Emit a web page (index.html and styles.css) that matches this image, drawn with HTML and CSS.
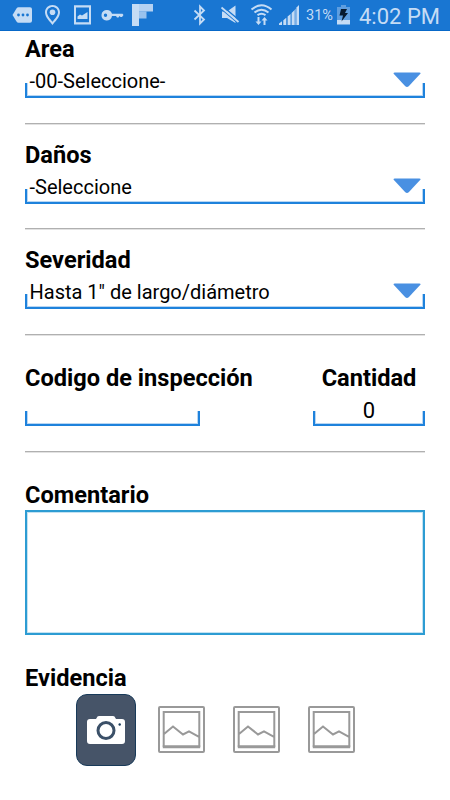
FILE: index.html
```
<!DOCTYPE html>
<html lang="es">
<head>
<meta charset="utf-8">
<title>Inspección</title>
<link rel="stylesheet" href="styles.css">
</head>
<body>
<header class="status">
  <svg class="status-icons" width="155" height="30" viewBox="0 0 155 30">
    <path d="M12.500 15l4-6.500q.8-1.200 2-1.200h11.500q2 0 2 2v11.400q0 2-2 2H18.500q-1.200 0-2-1.200z"/>
    <g class="blue"><circle cx="18.500" cy="15" r="1.400"/><circle cx="23" cy="15" r="1.400"/><circle cx="27.500" cy="15" r="1.400"/></g>
    <path fill-rule="evenodd" d="M52.500 5c-4.200 0-7.500 3.100-7.500 7.300 0 5 5.200 9.600 7.500 12.700 2.300-3.100 7.500-7.700 7.500-12.700C60 8.100 56.700 5 52.500 5zm0 2c3.100 0 5.500 2.300 5.500 5.300 0 3.400-3.400 6.700-5.500 9.500-2.100-2.800-5.500-6.100-5.500-9.500C47 9.300 49.400 7 52.500 7z"/>
    <circle cx="52.500" cy="12.300" r="2.800"/>
    <path fill-rule="evenodd" d="M74 5.300h17v19.200H74zM76 7.500v14.800h13V7.500z"/>
    <path d="M77.500 19v-2.500l2.500-2 2 1 5.500-3.500v7z"/>
    <path fill-rule="evenodd" d="M107 10a5.300 5.300 0 0 1 5 3.800h10.500l1 1.200-1.500 2h-1.500l-1-1-1 1.500h-1.500l-1-1.500h-4A5.300 5.300 0 1 1 107 10zm-1.500 3.600a1.700 1.700 0 1 0 0 3.400 1.700 1.700 0 0 0 0-3.400z"/>
    <path d="M132 4h7v22h-7z"/>
    <path opacity=".9" d="M139 4h14v7.500h-14z"/>
    <path opacity=".75" d="M139 11.500h7.500v7H139z"/>
  </svg>
  <div class="status-right">
    <svg width="108" height="30" viewBox="192 0 108 30">
      <path class="line" d="M194.500 10.500l9.500 9-4 4V6.500l4 4-9.500 9"/>
      <path d="M222 11.500h5L235.500 5.500V23L227 18h-5z"/>
      <path class="gap" d="M221 8.500l17 14.500M223 6.500l17 14.500"/>
      <path class="line" d="M221.500 7.500l17 14.500"/>
      <path class="wifi" d="M251.500 9.500Q261.500 1 271.500 9.500M254.500 12.500Q261.500 7 268.500 12.500M257.500 15.200Q261.500 12.500 265.500 15.200"/>
      <path d="M257.500 17h2v4.500h2l-3 3.500-3-3.500h2zM263.500 25h2v-4.500h2l-3-3.500-3 3.500h2z"/>
      <path d="M279 25v-1.500l3-2.200V25zm4.300 0v-4.800l3-2.400V25zm4.300 0v-8.400l3-2.700V25zm4 0V13l3-3v15z"/>
      <path opacity=".55" d="M294.500 10l2-2v17h-2z"/>
      <path d="M296.500 7.500l2.500-2.500v20h-2.500z"/>
    </svg>
    <span class="percent">31%</span>
    <svg class="battery" width="13" height="30" viewBox="337 0 13 30">
      <path opacity=".4" d="M341 5h5v2h4v14h-13V7h4z"/>
      <path d="M337 20h13v4.500h-13z"/>
      <path class="bolt" d="M341 9h6l-2 4h3l-6.500 8.500 1.500-6h-3.500z"/>
    </svg>
    <span class="clock">4:02 PM</span>
  </div>
</header>
<main class="form">
  <section class="group first">
    <label class="label">Area</label>
    <div class="field select"><span>-00-Seleccione-</span><svg class="arrow" width="28" height="16" viewBox="0 0 28 16"><path d="M1.800.5h24.500q2 0 .8 1.600L15.700 14.200q-1.700 1.500-3.400 0L.9 2.100Q-.1.500 1.800.5z"/></svg></div>
  </section>
  <section class="group">
    <label class="label">Daños</label>
    <div class="field select"><span>-Seleccione</span><svg class="arrow" width="28" height="16" viewBox="0 0 28 16"><path d="M1.800.5h24.500q2 0 .8 1.600L15.700 14.200q-1.700 1.500-3.400 0L.9 2.100Q-.1.500 1.800.5z"/></svg></div>
  </section>
  <section class="group">
    <label class="label">Severidad</label>
    <div class="field select"><span>Hasta 1" de largo/diámetro</span><svg class="arrow" width="28" height="16" viewBox="0 0 28 16"><path d="M1.800.5h24.500q2 0 .8 1.600L15.700 14.200q-1.700 1.500-3.400 0L.9 2.100Q-.1.500 1.800.5z"/></svg></div>
  </section>
  <section class="group pair">
    <div class="code">
      <label class="label">Codigo de inspección</label>
      <div class="field"></div>
    </div>
    <div class="quantity">
      <label class="label">Cantidad</label>
      <div class="field"><span>0</span></div>
    </div>
  </section>
  <section class="comment">
    <label class="label">Comentario</label>
    <div class="textarea"></div>
  </section>
  <section class="evidence">
    <label class="label">Evidencia</label>
    <div class="gallery">
      <div class="camera">
        <svg width="40" height="30" viewBox="0 0 40 30">
          <path class="white" d="M4 4h6l1.500-2.500Q12 1 13 1h14q1 0 1.500.500L30 4h6q3 0 3 3v19q0 3-3 3H4q-3 0-3-3V7q0-3 3-3z"/>
          <circle class="ring" cx="20" cy="15.500" r="8"/>
          <circle class="dot" cx="33.700" cy="9.500" r="1.200"/>
        </svg>
      </div>
      <svg class="photo" width="47" height="47" viewBox="0 0 47 47"><rect x="1" y="1" width="45" height="45" rx="1"/><path d="M5.700 41V6h35.600v35M6 28l9-7.500 10 8 6-3.200 10 5.500"/><path class="base" d="M4.800 40.700h37.400"/></svg>
      <svg class="photo" width="47" height="47" viewBox="0 0 47 47"><rect x="1" y="1" width="45" height="45" rx="1"/><path d="M5.700 41V6h35.600v35M6 28l9-7.500 10 8 6-3.200 10 5.500"/><path class="base" d="M4.800 40.700h37.400"/></svg>
      <svg class="photo" width="47" height="47" viewBox="0 0 47 47"><rect x="1" y="1" width="45" height="45" rx="1"/><path d="M5.700 41V6h35.600v35M6 28l9-7.500 10 8 6-3.200 10 5.500"/><path class="base" d="M4.800 40.700h37.400"/></svg>
    </div>
  </section>
</main>
</body>
</html>
```
FILE: styles.css
```
* { box-sizing: border-box; }
body {
  margin: 0;
  background: #fff;
  color: #000;
  font-family: Roboto, sans-serif;
}
svg { display: block; flex: none; }
.status {
  display: flex;
  justify-content: space-between;
  height: 31px;
  padding-right: 11px;
  background: #1976d2;
  border-bottom: 1px solid #0868c8;
  color: #c5dcf5;
  fill: #c5dcf5;
}
.status-right { display: flex; }
.blue { fill: #1976d2; }
.line { fill: none; stroke: #c5dcf5; stroke-width: 1.8; }
.gap { fill: none; stroke: #1976d2; stroke-width: 1.6; }
.wifi { fill: none; stroke: #c5dcf5; stroke-width: 2; }
.bolt { fill: #071a30; }
.percent {
  width: 31px;
  margin-left: 6px;
  font-size: 14.5px;
  line-height: 31px;
}
.clock {
  width: 80px;
  margin-left: 9px;
  font-size: 22px;
  line-height: 33px;
  white-space: nowrap;
}
.form { padding: 0 25px; }
.group {
  height: 105.5px;
  padding: 16px 0 25px;
  background: linear-gradient(#b0b0b0 50%, #e2e2e2 50%) left bottom / 100% 2px no-repeat;
}
.group.first { padding-top: 4px; height: 93.5px; }
.label {
  display: block;
  font-size: 23.6px;
  font-weight: 700;
  line-height: 28px;
  white-space: nowrap;
}
.field {
  height: 35px;
  font-size: 20px;
  line-height: 36px;
  background:
    linear-gradient(#1e82dc, #1e82dc) left bottom / 2px 15px no-repeat,
    linear-gradient(#1e82dc, #1e82dc) right bottom / 2px 15px no-repeat,
    linear-gradient(#1e82dc, #1e82dc) left bottom / 100% 2px no-repeat,
    linear-gradient(#b8d6f3, #b8d6f3) left bottom / 3px 15px no-repeat,
    linear-gradient(#b8d6f3, #b8d6f3) right bottom / 3px 15px no-repeat,
    linear-gradient(#b8d6f3, #b8d6f3) left bottom / 100% 3px no-repeat;
}
.select {
  display: flex;
  justify-content: space-between;
  padding: 0 4.500px 0 4.500px;
}
.arrow { margin-top: 9px; fill: #4990e2; }
.pair {
  display: flex;
  justify-content: space-between;
  height: 117px;
  padding-top: 28.5px;
}
.pair .field { height: 34px; }
.code { width: 175px; }
.quantity { width: 112px; text-align: center; }
.quantity .field { font-size: 22px; line-height: 37px; }
.comment { padding-top: 28.5px; }
.textarea {
  height: 125px;
  margin-top: 1px;
  border: 2px solid #2d9cd3;
  box-shadow: inset 0 0 0 1px #c3e2f2;
}
.evidence { padding-top: 28.5px; }
.gallery {
  display: flex;
  gap: 28px;
  margin-top: 2.5px;
  padding-left: 51px;
}
.camera {
  display: flex;
  align-items: center;
  justify-content: center;
  width: 60px;
  height: 72px;
  margin-right: -6px;
  border: 1px solid #183a59;
  border-radius: 11px;
  background: #465468;
}
.white { fill: #fff; }
.ring { fill: none; stroke: #3b5068; stroke-width: 3; }
.dot { fill: #183a59; }
.photo {
  margin-top: 12px;
  fill: none;
  stroke: #999;
  stroke-width: 2;
}
.photo .base { stroke-width: 3; }
```
